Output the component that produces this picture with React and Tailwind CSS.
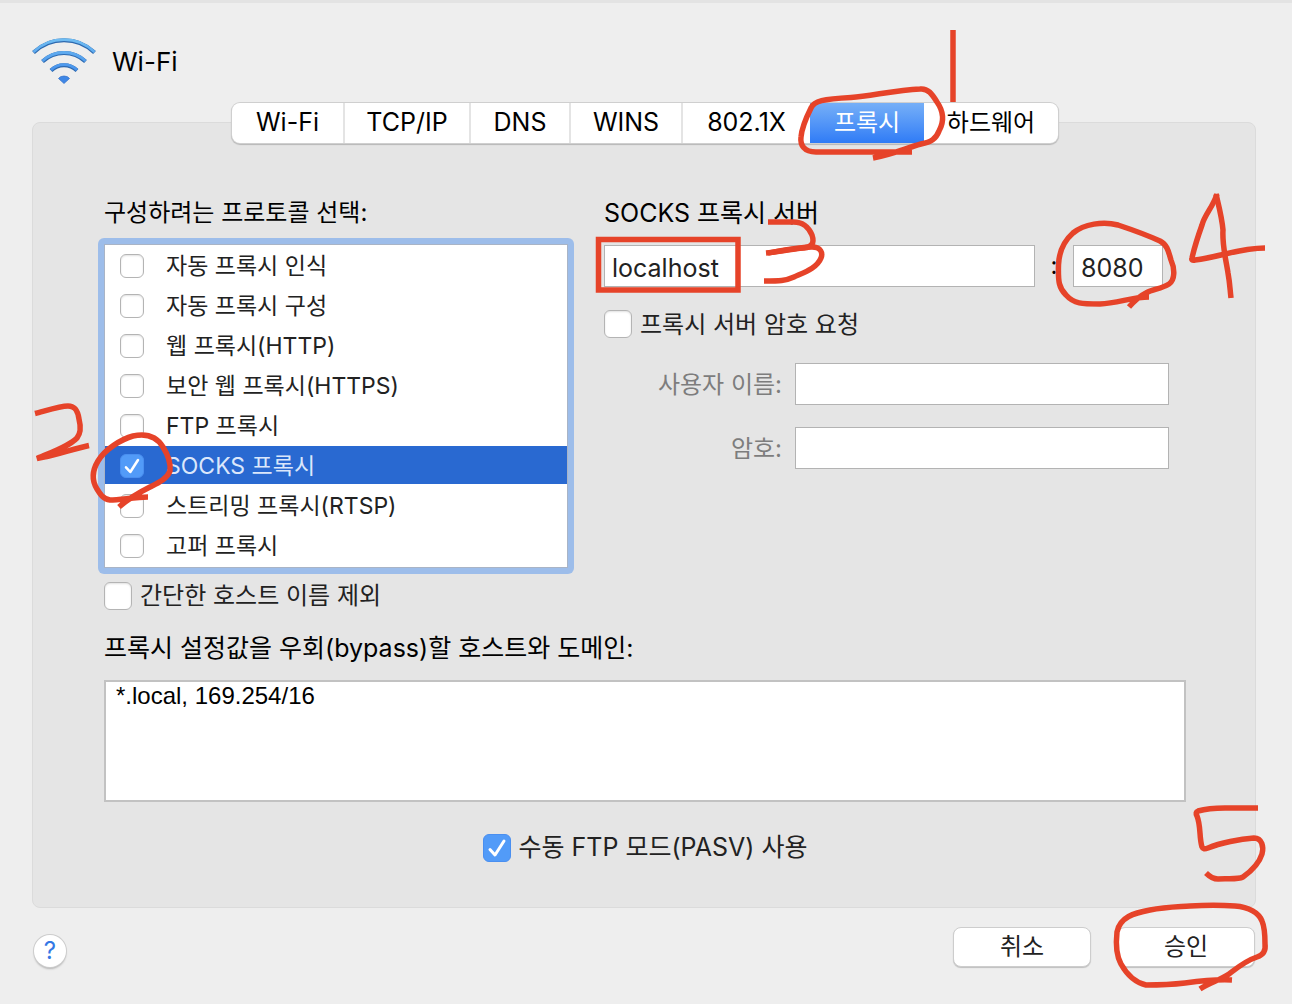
import React, { useState } from "react";

const FONT = "font-['Inter','Noto_Sans_CJK_KR',sans-serif]";

/* Hand-drawn red pen stroke, anchored to the element it points at. */
function Pen({ className, viewBox, paths }) {
  return (
    <svg
      aria-hidden="true"
      className={`pointer-events-none absolute z-10 max-w-none ${className}`}
      viewBox={viewBox}
      fill="none"
      stroke="#e64329"
      strokeWidth="5.5"
      strokeLinejoin="miter"
    >
      {paths.map((d) => (
        <path key={d} d={d} />
      ))}
    </svg>
  );
}

function WifiIcon() {
  const arcs = [
    "M33.5 52.5A44 44 0 0 1 94.500 52.5",
    "M42.500 61.500A31.500 31.500 0 0 1 85.500 61.500",
    "M51 70.500A18.500 18.500 0 0 1 77 70.500",
  ];
  return (
    <svg className="h-12 w-16 shrink-0" viewBox="32 37 64 48" fill="none" aria-hidden="true">
      <defs>
        <linearGradient id="wifi" gradientUnits="userSpaceOnUse" x1="64" y1="38" x2="64" y2="84">
          <stop offset="0" stopColor="#72bff2" />
          <stop offset="1" stopColor="#3580ea" />
        </linearGradient>
      </defs>
      {arcs.map((d) => (
        <g key={d}>
          <path d={d} stroke="#2c68ae" strokeWidth="4" />
          <path d={d} stroke="url(#wifi)" strokeWidth="2.800" transform="translate(0 -0.500)" />
        </g>
      ))}
      <path d="M58.500 78.500Q60 76 64 76T69.500 78.500L64 83.500Z" fill="#3f87e6" stroke="#2f6fc8" strokeWidth="0.700" />
    </svg>
  );
}

function Check({ id, small, checked = false }) {
  const [on, setOn] = useState(checked);
  return (
    <span className={`relative block shrink-0 ${small ? "size-6" : "size-7"}`}>
      <input
        id={id}
        type="checkbox"
        checked={on}
        onChange={(e) => setOn(e.target.checked)}
        className="block size-full appearance-none rounded-md border border-[#b4b4b4] bg-white shadow-[inset_0_1px_2px_rgba(0,0,0,0.12)] checked:border-[#4a8ff0] checked:bg-[#529bf8] checked:shadow-none"
      />
      {on && (
        <svg className="pointer-events-none absolute inset-0 size-full" viewBox="0 0 28 28" fill="none" aria-hidden="true">
          <path d="M7 15.500L12 21L21 7" stroke="white" strokeWidth="3" strokeLinecap="round" strokeLinejoin="round" />
        </svg>
      )}
    </span>
  );
}

const TABS = [
  ["Wi-Fi", "w-[113px] text-[25px]"],
  ["TCP/IP", "w-[126px] text-[25px]"],
  ["DNS", "w-[100px] text-[25px]"],
  ["WINS", "w-[112px] text-[25px]"],
  ["802.1X", "w-[127px] text-[25px]"],
  ["프록시", "w-[114px] text-2xl"],
  ["하드웨어", "w-[134px] text-2xl"],
];

const PROTOCOLS = [
  "자동 프록시 인식",
  "자동 프록시 구성",
  "웹 프록시(HTTP)",
  "보안 웹 프록시(HTTPS)",
  "FTP 프록시",
  "SOCKS 프록시",
  "스트리밍 프록시(RTSP)",
  "고퍼 프록시",
];

function Tabs() {
  return (
    <div role="tablist" className="mx-auto -mt-5 flex h-10 w-fit rounded-lg bg-white shadow-[0_0_0_1px_#cfcfcf,0_1px_1px_1px_rgba(0,0,0,0.2)]">
      {TABS.map(([name, style], i) => {
        const active = name === "프록시";
        return (
          <div key={name} className={`relative ${style} ${i < 4 ? "border-r-2 border-[#e4e4e4]" : ""}`}>
            <button
              role="tab"
              aria-selected={active}
              className={`h-full w-full whitespace-nowrap ${
                active ? "bg-linear-to-b from-[#76aff7] to-[#2f7bf6] text-white" : "text-black"
              }`}
            >
              {name}
            </button>
            {active && (
              <Pen
                className="-left-3.5 -top-20 h-36 w-40"
                viewBox="795 23 160 144"
                paths={[
                  "M952 30V102",
                  "M911 152H815C803 152 799 145 800 137C801 126 807 114 810 108C813 101 822 99 850 97.500C870 96 895 90 919 89C927 88 931 94 936 102C943 112 943 122 938 131C935 139 930 142 920 144C905 148 893 154 872 158",
                ]}
              />
            )}
          </div>
        );
      })}
    </div>
  );
}

function ProtocolList() {
  return (
    <div className="-mx-1.5 rounded-md bg-[#9dbdea] p-1.5">
      <ul className="flex flex-col gap-0.5 border border-[#a9b4c6] bg-white pt-px pb-[3px] text-[23px]">
        {PROTOCOLS.map((name, i) => {
          const selected = name === "SOCKS 프록시";
          return (
            <li key={name} className={`relative flex h-[38px] items-center pt-0.5 pl-[15px] ${selected ? "bg-[#2969d1] text-[#dbe7fb]" : "text-[#222]"}`}>
              <Check id={`protocol-${i}`} small checked={selected} />
              <label htmlFor={`protocol-${i}`} className="pl-[22px] whitespace-nowrap">
                {name}
              </label>
              {selected && (
                <Pen
                  className="-left-[75px] -top-[46px] h-28 w-[150px]"
                  viewBox="30 400 150 112"
                  paths={[
                    "M35 413.500C45 411 60 406 68 406C76 406 78 412 79 419C81 427 81 433 77 438C68 447 52 452 37 458.500C55 456 72 449 89 445.500",
                    "M148 497C135 497 120 500 110 500C103 499 100 494 97 489C92 481 92 471 98 461C105 449 122 439 133 436C147 433 157 437 163 447C168 455 171 463 170 471C167 479 158 483 150 487C140 492 128 499 119 507",
                  ]}
                />
              )}
            </li>
          );
        })}
      </ul>
    </div>
  );
}

const FIELD = "h-[42px] min-w-0 border border-[#b3b3b3] bg-white px-[7px] pt-1 text-[25px] text-[#222] outline-none";

function ServerForm() {
  return (
    <section className="min-w-0 flex-1">
      <label htmlFor="host" className="block h-9 text-[25px] leading-9 text-black">
        SOCKS 프록시 서버
      </label>
      <div className="mt-[14px] flex items-center pr-[23px]">
        <div className="relative flex min-w-0 flex-1">
          <input id="host" defaultValue="localhost" className={`${FIELD} w-full`} />
          <Pen
            className="-left-3.5 -top-[35px] h-[90px] w-60"
            viewBox="590 210 240 90"
            paths={[
              "M598.500 239.500H738V290H598.500Z",
              "M768 222H791C804 221 809 228 812 235C815 244 811 247 804 248C790 249 778 252 766 253",
              "M768 253C785 250 800 247 812 247C821 247 823 253 821 258C817 268 805 272 794 277C785 281 780 281 764 281",
            ]}
          />
        </div>
        <span className="w-[38px] text-center text-black">:</span>
        <div className="relative w-[90px]">
          <input id="port" aria-label="포트" defaultValue="8080" className={`${FIELD} block w-full`} />
          <Pen
            className="-left-[23px] -top-[60px] h-[130px] w-[220px]"
            viewBox="1050 185 220 130"
            paths={[
              "M1149 297C1133 297 1118 303 1100 304C1082 304 1074 304 1066 295C1059 288 1058 282 1058.500 265C1059 250 1064 241 1073 233C1084 224 1103 221 1118 225C1130 229 1149 236 1160 241C1168 245 1169 254 1171 260C1175 269 1175 280 1169 284C1161 289 1153 289 1146 293C1140 296 1135 300 1129 307",
              "M1217 194C1213 207 1205 214 1202 225C1197 239 1194 249 1192 258Q1191 261 1195 260C1220 257 1240 248 1265 248",
              "M1216 194C1220 211 1222 218 1223 230C1222 245 1226 260 1228 273C1230 284 1230 290 1231 298",
            ]}
          />
        </div>
      </div>
      <div className="mt-[19px] flex h-9 items-center gap-2 text-[#222]">
        <Check id="auth" />
        <label htmlFor="auth" className="pt-0.5 whitespace-nowrap">프록시 서버 암호 요청</label>
      </div>
      <div className="mt-[21px] grid grid-cols-[178px_1fr] items-center gap-x-[13px] gap-y-[22px] pr-[17px] text-[#7d7d7d]">
        <label htmlFor="user" className="pt-0.5 text-right">사용자 이름:</label>
        <input id="user" className={FIELD} />
        <label htmlFor="password" className="pt-0.5 text-right">암호:</label>
        <input id="password" type="password" className={FIELD} />
      </div>
    </section>
  );
}

const BUTTON = "h-10 w-full rounded-lg border border-[#cdcdcd] bg-white text-[#222] shadow-[0_1px_1px_rgba(0,0,0,0.2)]";

export default function App() {
  return (
    <main className={`flex min-h-screen flex-col overflow-hidden border-t-[3px] border-[#e3e3e3] bg-[#eeeeee] pr-9 pb-[37px] pl-8 text-2xl ${FONT}`}>
      <header className="mt-[34px] flex items-center gap-4">
        <WifiIcon />
        <h1 className="pt-0.5 text-[26px] leading-8 text-black">Wi-Fi</h1>
      </header>

      <div className="mt-[37px] flex-1 rounded-lg border border-[#dbdbdb] bg-[#e5e5e5] pr-[69px] pl-[71px]">
        <Tabs />
        <div className="mt-[52px] flex gap-9">
          <section className="w-[464px] shrink-0">
            <h2 className="h-9 leading-9 text-black">구성하려는 프로토콜 선택:</h2>
            <div className="mt-[7px]">
              <ProtocolList />
            </div>
          </section>
          <ServerForm />
        </div>
        <div className="mt-1 flex h-9 items-center gap-2 text-[#222]">
          <Check id="simple" />
          <label htmlFor="simple">간단한 호스트 이름 제외</label>
        </div>
        <label htmlFor="bypass" className="mt-4 block h-9 text-[25px] leading-9 text-black">
          프록시 설정값을 우회(bypass)할 호스트와 도메인:
        </label>
        <textarea
          id="bypass"
          defaultValue="*.local, 169.254/16"
          className="mt-[14px] block h-[122px] w-full resize-none border-2 border-[#c2c2c2] bg-white px-2.5 font-['Liberation_Sans',sans-serif] leading-7 text-black outline-none"
        />
        <div className="my-7 flex h-9 items-center justify-center gap-2 text-[25px] text-[#222]">
          <Check id="pasv" checked />
          <label htmlFor="pasv">수동 FTP 모드(PASV) 사용</label>
        </div>
      </div>

      <footer className="mt-[19px] mr-px flex items-center">
        <button aria-label="도움말" className="mt-2 ml-0.5 size-8 rounded-full bg-white text-[#3478e5] shadow-[0_0_0_1px_#cdcdcd,0_2px_2px_rgba(0,0,0,0.25)]">
          ?
        </button>
        <div className="ml-auto flex gap-[26px]">
          <div className="w-[138px]">
            <button className={BUTTON}>취소</button>
          </div>
          <div className="relative w-[138px]">
            <button className={BUTTON}>승인</button>
            <Pen
              className="-left-[7px] -top-[127px] h-[200px] w-40"
              viewBox="1110 800 160 200"
              paths={[
                "M1258 808H1225C1213 808 1205 809 1198 811Q1195 812 1197 816C1201 826 1199 837 1202 847Q1203 850 1208 848C1220 843 1240 839 1254 838C1262 838 1264 847 1262 854C1259 864 1250 872 1243 877C1237 880 1226 878 1218 879C1213 879 1210 877 1206 873",
                "M1232 980C1215 979 1200 981 1185 983C1168 985 1155 985 1146 985C1133 982 1126 973 1121 964C1115 953 1116 941 1117 932C1120 917 1134 913 1150 910C1165 907 1175 907 1190 906C1205 905 1222 905 1235 906C1249 907 1259 913 1262 921C1265 928 1265 936 1265 944C1266 951 1263 955 1257 957C1245 961 1237 968 1229 974C1220 980 1209 983 1200 989",
              ]}
            />
          </div>
        </div>
      </footer>
    </main>
  );
}
